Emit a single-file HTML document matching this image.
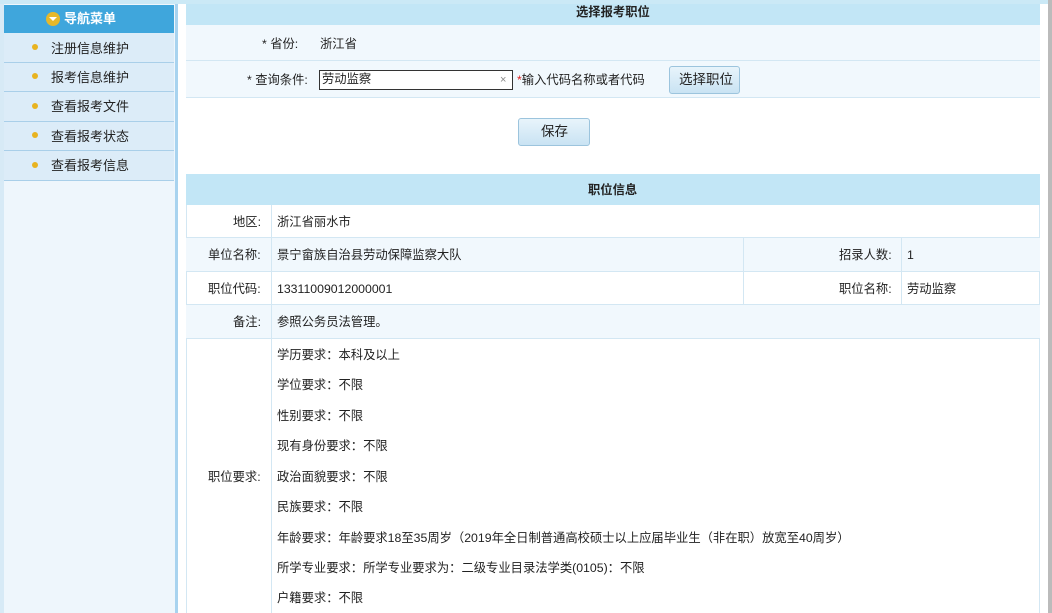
<!DOCTYPE html>
<html><head><meta charset="utf-8"><style>
*{margin:0;padding:0;box-sizing:border-box}
body{width:1052px;height:613px;overflow:hidden;background:#fff;font-family:"Liberation Sans","Noto Sans CJK SC","WenQuanYi Zen Hei",sans-serif;font-size:12.3px;color:#222;position:relative}
.a{position:absolute}
.t{position:absolute;white-space:nowrap;line-height:16px}
.s{font-size:13px}
</style></head><body>
<div class="a" style="left:0;top:0;width:1052px;height:4px;background:#cbe9f6"></div>
<!-- sidebar -->
<div class="a" style="left:0;top:4px;width:4px;height:609px;background:#d7eaf6"></div>
<div class="a" style="left:4px;top:4px;width:174px;height:609px;background:#eef6fc;border-right:3px solid #a8d3ef"></div>
<div class="a" style="left:4px;top:5px;width:170px;height:28px;background:#3fa6dc"></div>
<div class="a" style="left:46px;top:12px;width:14px;height:14px;border-radius:50%;background:#e6b82a"></div>
<div class="a" style="left:49px;top:17px;width:0;height:0;border-left:4px solid transparent;border-right:4px solid transparent;border-top:4px solid #fff"></div>
<div class="t s" style="left:64px;top:11px;color:#fff;font-weight:bold">导航菜单</div>
<div class="a" style="left:4px;top:33px;width:170px;height:148px;background:#dcecf8"></div>
<div class="a" style="left:4px;top:62px;width:170px;height:1px;background:#a9cfe9"></div>
<div class="a" style="left:4px;top:91px;width:170px;height:1px;background:#a9cfe9"></div>
<div class="a" style="left:4px;top:121px;width:170px;height:1px;background:#a9cfe9"></div>
<div class="a" style="left:4px;top:150px;width:170px;height:1px;background:#a9cfe9"></div>
<div class="a" style="left:4px;top:180px;width:170px;height:1px;background:#a9cfe9"></div>
<div class="a" style="left:32px;top:44px;width:6px;height:6px;border-radius:50%;background:#e8b320"></div>
<div class="a" style="left:32px;top:73px;width:6px;height:6px;border-radius:50%;background:#e8b320"></div>
<div class="a" style="left:32px;top:103px;width:6px;height:6px;border-radius:50%;background:#e8b320"></div>
<div class="a" style="left:32px;top:132px;width:6px;height:6px;border-radius:50%;background:#e8b320"></div>
<div class="a" style="left:32px;top:162px;width:6px;height:6px;border-radius:50%;background:#e8b320"></div>
<div class="t s" style="left:51px;top:41px">注册信息维护</div>
<div class="t s" style="left:51px;top:70px">报考信息维护</div>
<div class="t s" style="left:51px;top:99px">查看报考文件</div>
<div class="t s" style="left:51px;top:129px">查看报考状态</div>
<div class="t s" style="left:51px;top:158px">查看报考信息</div>
<!-- top form -->
<div class="a" style="left:186px;top:4px;width:854px;height:21px;background:#c2e6f6"></div>
<div class="t" style="left:576px;top:4px;font-weight:bold">选择报考职位</div>
<div class="a" style="left:186px;top:25px;width:854px;height:73px;background:#f1f8fd;border-bottom:1px solid #d3e7f3"></div>
<div class="a" style="left:186px;top:60px;width:854px;height:1px;background:#d3e7f3"></div>
<div class="t" style="left:262px;top:36px">* 省份:</div>
<div class="t" style="left:320px;top:36px">浙江省</div>
<div class="t" style="left:247px;top:72px">* 查询条件:</div>
<div class="a" style="left:319px;top:70px;width:194px;height:20px;border:1px solid #333;background:#fff"></div>
<div class="t" style="left:322px;top:71px">劳动监察</div>
<div class="t" style="left:500px;top:72px;color:#888;font-size:11px">×</div>
<div class="t" style="left:517px;top:72px"><span style="color:#d22">*</span>输入代码名称或者代码</div>
<div class="a" style="left:669px;top:66px;width:71px;height:28px;border:1px solid #9cc4dd;border-radius:3px;background:linear-gradient(#e8f4fb,#c9e3f3)"></div>
<div class="t" style="left:679px;top:72px;font-size:13.5px">选择职位</div>
<div class="a" style="left:518px;top:118px;width:72px;height:28px;border:1px solid #9cc4dd;border-radius:3px;background:linear-gradient(#e8f4fb,#c9e3f3)"></div>
<div class="t" style="left:541px;top:124px;font-size:13.5px">保存</div>
<!-- info table -->
<div class="a" style="left:186px;top:174px;width:854px;height:31px;background:#c2e6f6"></div>
<div class="t" style="left:588px;top:182px;font-weight:bold">职位信息</div>
<div class="a" style="left:186px;top:205px;width:854px;height:408px;border-left:1px solid #d3e7f3;border-right:1px solid #d3e7f3"></div>
<div class="a" style="left:186px;top:238px;width:854px;height:33px;background:#f1f8fd"></div>
<div class="a" style="left:186px;top:304px;width:854px;height:34px;background:#f1f8fd"></div>
<div class="a" style="left:186px;top:237px;width:854px;height:1px;background:#d3e7f3"></div>
<div class="a" style="left:186px;top:271px;width:854px;height:1px;background:#d3e7f3"></div>
<div class="a" style="left:186px;top:304px;width:854px;height:1px;background:#d3e7f3"></div>
<div class="a" style="left:186px;top:338px;width:854px;height:1px;background:#d3e7f3"></div>
<div class="a" style="left:271px;top:205px;width:1px;height:408px;background:#d3e7f3"></div>
<div class="a" style="left:743px;top:238px;width:1px;height:66px;background:#d3e7f3"></div>
<div class="a" style="left:901px;top:238px;width:1px;height:66px;background:#d3e7f3"></div>
<div class="t" style="left:233px;top:214px">地区:</div>
<div class="t" style="left:277px;top:214px">浙江省丽水市</div>
<div class="t" style="left:208px;top:247px">单位名称:</div>
<div class="t" style="left:277px;top:247px">景宁畲族自治县劳动保障监察大队</div>
<div class="t" style="left:839px;top:247px">招录人数:</div>
<div class="t" style="left:907px;top:247px">1</div>
<div class="t" style="left:208px;top:281px">职位代码:</div>
<div class="t" style="left:277px;top:281px">13311009012000001</div>
<div class="t" style="left:839px;top:281px">职位名称:</div>
<div class="t" style="left:907px;top:281px">劳动监察</div>
<div class="t" style="left:233px;top:314px">备注:</div>
<div class="t" style="left:277px;top:314px">参照公务员法管理。</div>
<div class="t" style="left:208px;top:469px">职位要求:</div>
<div class="t" style="left:277px;top:347px">学历要求：本科及以上</div>
<div class="t" style="left:277px;top:377px">学位要求：不限</div>
<div class="t" style="left:277px;top:408px">性别要求：不限</div>
<div class="t" style="left:277px;top:438px">现有身份要求：不限</div>
<div class="t" style="left:277px;top:469px">政治面貌要求：不限</div>
<div class="t" style="left:277px;top:499px">民族要求：不限</div>
<div class="t" style="left:277px;top:530px">年龄要求：年龄要求18至35周岁（2019年全日制普通高校硕士以上应届毕业生（非在职）放宽至40周岁）</div>
<div class="t" style="left:277px;top:560px">所学专业要求：所学专业要求为：二级专业目录法学类(0105)：不限</div>
<div class="t" style="left:277px;top:590px">户籍要求：不限</div>
<div class="a" style="left:1048px;top:0;width:4px;height:613px;background:#bbb"></div>
</body></html>
